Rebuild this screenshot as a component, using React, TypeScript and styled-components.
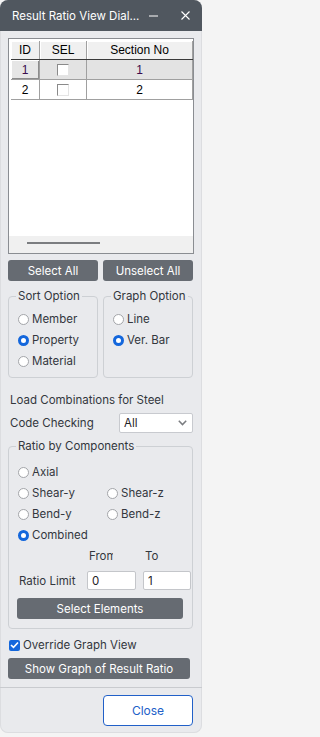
import styled, { createGlobalStyle } from "styled-components";

const GlobalStyle = createGlobalStyle`
  html, body {
    margin: 0;
    padding: 0;
    background: #f4f4f4;
  }
  body {
    font-family: Inter, "Noto Sans", sans-serif;
    font-size: 11.5px;
    color: #33373d;
  }
  * {
    box-sizing: border-box;
  }
`;

const Dialog = styled.div`
  width: 202px;
  height: 733px;
  background: #e9eaed;
  border-radius: 8px;
  overflow: hidden;
  display: flex;
  flex-direction: column;
  box-shadow: inset 0 0 0 1px #dcdde0;
`;

const TitleBar = styled.div`
  height: 31px;
  flex: none;
  display: flex;
  align-items: center;
  padding: 0 12px 0 12px;
  background: #50575f;
  color: #ffffff;
  font-size: 11.5px;
`;

const Title = styled.span`
  flex: 1;
  min-width: 0;
  white-space: nowrap;
  overflow: hidden;
`;

const TitleIcon = styled.svg<{ $gap?: number }>`
  width: 9px;
  height: 9px;
  margin-left: ${({ $gap }) => $gap ?? 0}px;
  flex: none;
`;

const Body = styled.div`
  display: flex;
  flex-direction: column;
  padding: 7px 8px 0 8px;
`;

const TableFrame = styled.div`
  height: 216px;
  display: flex;
  flex-direction: column;
  padding: 2px 0 0 2px;
  background: #ffffff;
  border: 1px solid #8a8d92;
  font-family: "Liberation Sans", Arial, sans-serif;
  font-size: 12px;
  color: #000;
`;

const GridRow = styled.div<{ $head?: boolean; $selected?: boolean }>`
  display: grid;
  grid-template-columns: 29px 47px 106px;
  height: ${({ $head }) => ($head ? 19 : 20)}px;
  border-bottom: 1px solid ${({ $head }) => ($head ? "#3a3a3a" : "#a0a0a0")};
  background: ${({ $head, $selected }) =>
    $head ? "#f0f0f0" : $selected ? "#e3e3e3" : "#ffffff"};
  color: ${({ $selected }) => ($selected ? "#3a0c4e" : "#000")};
`;

const Cell = styled.div<{ $raised?: boolean }>`
  display: flex;
  align-items: center;
  justify-content: center;
  border-right: 1px solid #a0a0a0;
  ${({ $raised }) =>
    $raised &&
    `
    background: #e6e6e6;
    box-shadow: inset 1px 1px 0 #ffffff, inset -1px -1px 0 #8c8c8c;
  `}
`;

const HeadCell = styled(Cell)`
  box-shadow: inset 1px 1px 0 #ffffff;
`;

const CellBox = styled.span`
  width: 12px;
  height: 12px;
  background: #ffffff;
  border-top: 1px solid #8a8a8a;
  border-left: 1px solid #8a8a8a;
  border-right: 1px solid #e4e4e4;
  border-bottom: 1px solid #e4e4e4;
`;

const TableSpace = styled.div`
  flex: 1;
`;

const HScroll = styled.div`
  height: 17px;
  margin-left: -2px;
  background: #f0f0f0;
  padding: 6px 0 0 18px;
`;

const Thumb = styled.div`
  width: 73px;
  height: 2px;
  background: #7b7d80;
`;

const ButtonPair = styled.div`
  display: grid;
  grid-template-columns: 90px 90px;
  gap: 5px;
  margin-top: 6px;
`;

const DarkButton = styled.button<{ $width?: number }>`
  height: 21px;
  width: ${({ $width }) => ($width ? `${$width}px` : "auto")};
  border: none;
  border-radius: 3px;
  background: #666b72;
  color: #ffffff;
  font-family: Inter, "Noto Sans", sans-serif;
  font-size: 11.5px;
  padding: 0;
`;

const GroupRow = styled.div`
  display: grid;
  grid-template-columns: 90px 90px;
  gap: 5px;
  margin-top: 8px;
`;

const Group = styled.fieldset`
  margin: 0;
  padding: 0;
  min-width: 0;
  border: 1px solid #cdd0d4;
  border-radius: 4px;
`;

const Legend = styled.legend`
  margin-left: 7px;
  padding: 0 2px;
  line-height: 14px;
  font-size: 11.5px;
`;

const OptionList = styled.div`
  display: flex;
  flex-direction: column;
  gap: 7px;
  padding: 9px 0 9px 9px;
`;

const OptionGrid = styled.div`
  display: grid;
  grid-template-columns: 89px 1fr;
  row-gap: 7px;
  padding: 12px 0 0 9px;
`;

const Option = styled.label`
  display: flex;
  align-items: center;
  gap: 3px;
  height: 14px;
  white-space: nowrap;
`;

const RadioDot = styled.span<{ $on?: boolean }>`
  width: 11px;
  height: 11px;
  flex: none;
  border-radius: 50%;
  background: #ffffff;
  border: ${({ $on }) => ($on ? "3.5px solid #1467dc" : "1px solid #a3a5a9")};
`;

const Caption = styled.div`
  margin-top: 14px;
  padding-left: 2px;
  line-height: 16px;
`;

const FieldRow = styled.div`
  display: flex;
  align-items: center;
  justify-content: space-between;
  margin-top: 5px;
  padding: 0 1px 0 2px;
`;

const SelectBox = styled.div`
  width: 74px;
  height: 20px;
  display: flex;
  align-items: center;
  justify-content: space-between;
  padding: 0 5px 0 4px;
  background: #ffffff;
  border: 1px solid #c8cacf;
  border-radius: 2px;
  color: #1f2226;
`;

const RatioGroup = styled(Group)`
  margin-top: 6px;
  width: 185px;
`;

const LimitGrid = styled.div<{ $top: number }>`
  display: grid;
  grid-template-columns: 62px 49px 48px;
  column-gap: 7px;
  align-items: center;
  margin-top: ${({ $top }) => $top}px;
  padding-left: 9px;
`;

const SmallHead = styled.span`
  display: block;
  width: 24px;
  margin-left: 2px;
  overflow: hidden;
  white-space: nowrap;
  line-height: 14px;
`;

const LimitLabel = styled.span`
  padding-left: 1px;
  white-space: nowrap;
`;

const NumberInput = styled.div`
  height: 19px;
  display: flex;
  align-items: center;
  padding-left: 4px;
  background: #ffffff;
  border: 1px solid #c4c6ca;
  border-radius: 2px;
  color: #1f2226;
`;

const GroupAction = styled.div`
  display: flex;
  padding: 8px 9px 9px 8px;
`;

const CheckRow = styled.label`
  display: flex;
  align-items: center;
  gap: 3px;
  height: 14px;
  margin-top: 9px;
  padding-left: 1px;
`;

const CheckMark = styled.span`
  width: 11px;
  height: 11px;
  display: flex;
  align-items: center;
  justify-content: center;
  border-radius: 2px;
  background: #1467dc;
`;

const WideRow = styled.div`
  display: flex;
  margin-top: 6px;
`;

const Footer = styled.div`
  margin-top: 8px;
  border-top: 1px solid #c9cbcf;
  display: flex;
  justify-content: flex-end;
  padding: 7px 9px 0 0;
`;

const CloseButton = styled.button`
  width: 90px;
  height: 31px;
  background: #ffffff;
  border: 1.5px solid #2160c8;
  border-radius: 4px;
  color: #2160c8;
  font-family: Inter, "Noto Sans", sans-serif;
  font-size: 12px;
`;

const Radio = ({ label, on }: { label: string; on?: boolean }) => (
  <Option>
    <RadioDot $on={on} />
    {label}
  </Option>
);

const rows = [
  { id: 1, section: 1 },
  { id: 2, section: 2 },
];

export default function App() {
  return (
    <>
      <GlobalStyle />
      <Dialog>
        <TitleBar>
          <Title>Result Ratio View Dial...</Title>
          <TitleIcon viewBox="0 0 9 9">
            <line x1="0" y1="5" x2="9" y2="5" stroke="#fff" strokeWidth="1" />
          </TitleIcon>
          <TitleIcon viewBox="0 0 9 9" $gap={23}>
            <path d="M0.5 0.5 L8.5 8.5 M8.5 0.5 L0.5 8.5" stroke="#fff" strokeWidth="1.1" />
          </TitleIcon>
        </TitleBar>
        <Body>
          <TableFrame>
            <GridRow $head>
              <HeadCell>ID</HeadCell>
              <HeadCell>SEL</HeadCell>
              <HeadCell>Section No</HeadCell>
            </GridRow>
            {rows.map((r, i) => (
              <GridRow key={r.id} $selected={i === 0}>
                <Cell $raised={i === 0}>{r.id}</Cell>
                <Cell>
                  <CellBox />
                </Cell>
                <Cell>{r.section}</Cell>
              </GridRow>
            ))}
            <TableSpace />
            <HScroll>
              <Thumb />
            </HScroll>
          </TableFrame>

          <ButtonPair>
            <DarkButton>Select All</DarkButton>
            <DarkButton>Unselect All</DarkButton>
          </ButtonPair>

          <GroupRow>
            <Group>
              <Legend>Sort Option</Legend>
              <OptionList>
                <Radio label="Member" />
                <Radio label="Property" on />
                <Radio label="Material" />
              </OptionList>
            </Group>
            <Group>
              <Legend>Graph Option</Legend>
              <OptionList>
                <Radio label="Line" />
                <Radio label="Ver. Bar" on />
              </OptionList>
            </Group>
          </GroupRow>

          <Caption>Load Combinations for Steel</Caption>
          <FieldRow>
            <span>Code Checking</span>
            <SelectBox>
              All
              <svg width="9" height="6" viewBox="0 0 9 6">
                <path d="M0.8 0.8 L4.5 4.6 L8.2 0.8" fill="none" stroke="#7a7c80" strokeWidth="1.5" />
              </svg>
            </SelectBox>
          </FieldRow>

          <RatioGroup>
            <Legend>Ratio by Components</Legend>
            <OptionGrid>
              <Radio label="Axial" />
              <span />
              <Radio label="Shear-y" />
              <Radio label="Shear-z" />
              <Radio label="Bend-y" />
              <Radio label="Bend-z" />
              <Radio label="Combined" on />
            </OptionGrid>
            <LimitGrid $top={7}>
              <span />
              <SmallHead>From</SmallHead>
              <SmallHead>To</SmallHead>
            </LimitGrid>
            <LimitGrid $top={8}>
              <LimitLabel>Ratio Limit</LimitLabel>
              <NumberInput>0</NumberInput>
              <NumberInput>1</NumberInput>
            </LimitGrid>
            <GroupAction>
              <DarkButton $width={166}>Select Elements</DarkButton>
            </GroupAction>
          </RatioGroup>

          <CheckRow>
            <CheckMark>
              <svg width="9" height="8" viewBox="0 0 9 8">
                <path d="M1 4 L3.5 6.4 L8 1.5" fill="none" stroke="#fff" strokeWidth="1.6" />
              </svg>
            </CheckMark>
            Override Graph View
          </CheckRow>
          <WideRow>
            <DarkButton $width={182}>Show Graph of Result Ratio</DarkButton>
          </WideRow>
        </Body>
        <Footer>
          <CloseButton>Close</CloseButton>
        </Footer>
      </Dialog>
    </>
  );
}
